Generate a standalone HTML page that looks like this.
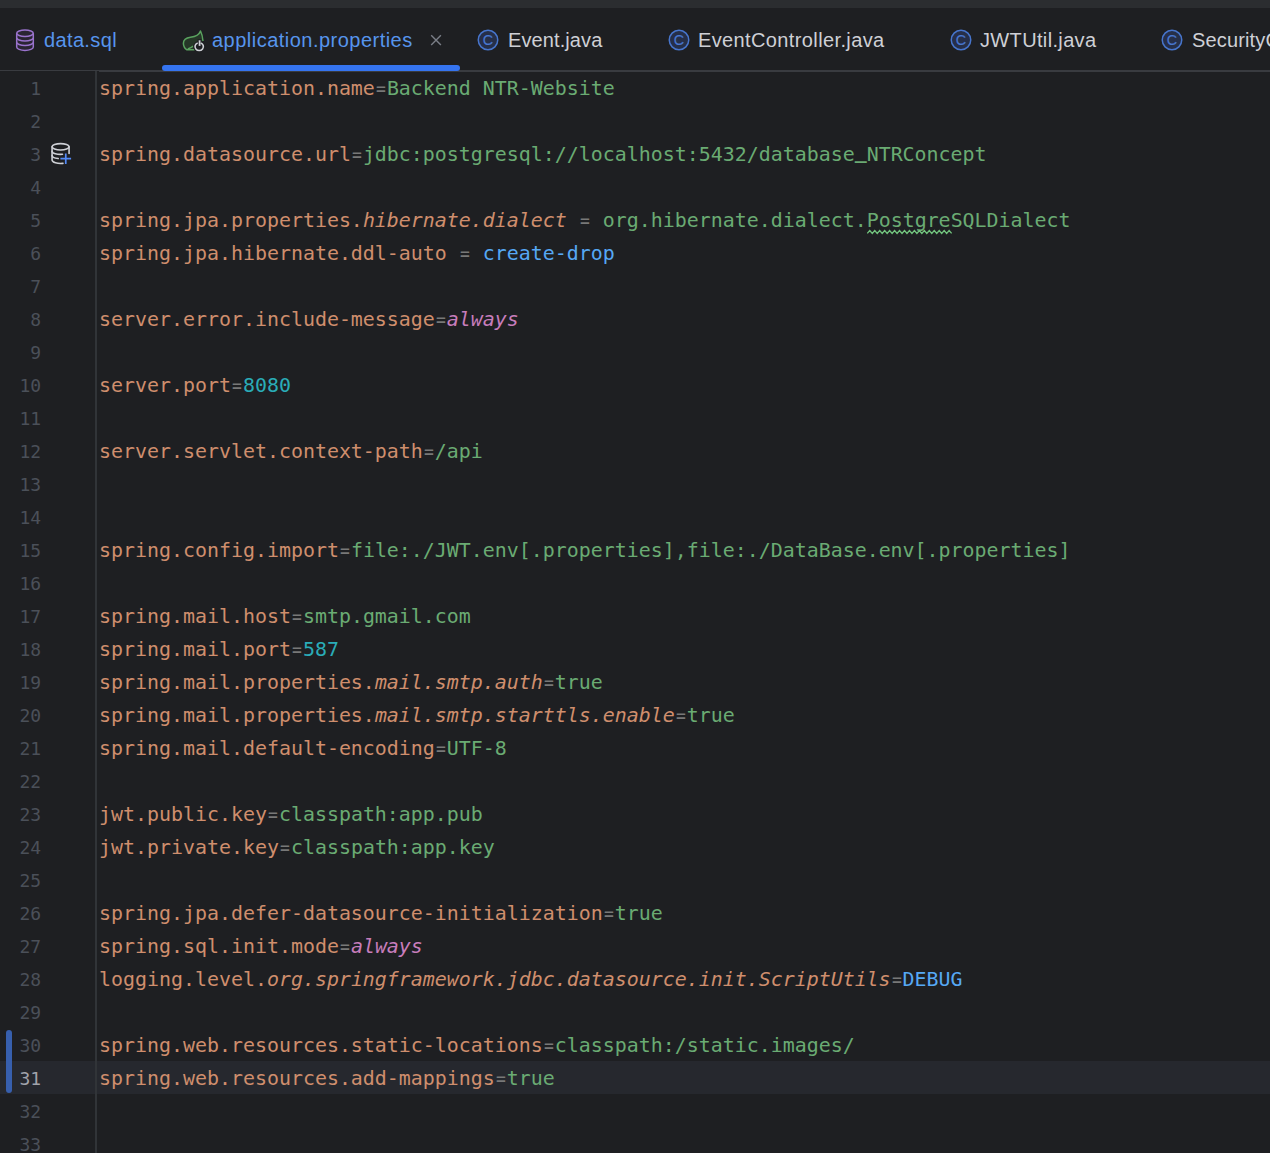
<!DOCTYPE html>
<html><head><meta charset="utf-8"><title>application.properties</title>
<style>
html,body{margin:0;padding:0}
body{width:1270px;height:1153px;overflow:hidden;background:#1e1f22;position:relative;font-family:"Liberation Sans",sans-serif}
.strip{position:absolute;left:0;top:0;width:1270px;height:8px;background:#2b2d30}
.tabline{position:absolute;left:0;top:70px;width:1270px;height:1px;background:#393b40}
.tabline2{position:absolute;left:99px;top:71px;width:1171px;height:1px;background:#393b40}
.under{position:absolute;left:162px;top:65px;width:298px;height:6px;border-radius:3px;background:#3574f0}
.tab{position:absolute;top:25.4px;height:30px;line-height:30px;font-size:20px;color:#ced0d6;white-space:nowrap}
.tab.b{color:#5795ed}
.curline{position:absolute;left:0;top:1061px;width:1270px;height:33px;background:#26282e}
.gline{position:absolute;left:95px;top:71px;width:2px;height:1082px;background:#313438}
.chg{position:absolute;left:5.5px;top:1030px;width:6px;height:63px;border-radius:3px;background:#375fad}
.ln{position:absolute;left:0;width:41px;height:33px;line-height:33px;text-align:right;color:#4b5059;font:18px/33px "DejaVu Sans Mono","Liberation Mono",monospace;letter-spacing:-0.04px}
.ln.cur{color:#a1a3ab}
.cl{position:absolute;left:99px;height:33px;white-space:pre;font:19.93px/33px "DejaVu Sans Mono","Liberation Mono",monospace;color:#bcbec4}
.k,.ki{color:#cf8e6d}.ki{font-style:italic}
.e{color:#787878}
.q{display:inline-block;transform:scaleX(0.82)}
.v,.vw{color:#6aab73}
.us{position:relative;top:-3.5px;font-weight:bold}
.n{color:#2aacb8}
.b{color:#56a8f5}
.p{color:#c77dbb;font-style:italic}
svg{position:absolute;overflow:visible}
</style></head><body>
<div class="strip"></div>
<div class="tabline"></div><div class="tabline2"></div>
<div class="under"></div>
<div class="tab b" style="left:44px;letter-spacing:0.36px">data.sql</div>
<div class="tab b" style="left:212px;letter-spacing:0.48px">application.properties</div>
<div class="tab" style="left:508px;letter-spacing:0.1px">Event.java</div>
<div class="tab" style="left:698px;letter-spacing:0.38px">EventController.java</div>
<div class="tab" style="left:980px;letter-spacing:0.35px">JWTUtil.java</div>
<div class="tab" style="left:1192px;letter-spacing:0.15px">SecurityConfig.java</div>
<div class="curline"></div>
<div class="gline"></div>
<div class="chg"></div>
<div class="ln" style="top:72px">1</div>
<div class="cl" style="top:72px"><span class="k">spring.application.name</span><span class="e"><span class="q">=</span></span><span class="v">Backend NTR-Website</span></div>
<div class="ln" style="top:105px">2</div>
<div class="ln" style="top:138px">3</div>
<div class="cl" style="top:138px"><span class="k">spring.datasource.url</span><span class="e"><span class="q">=</span></span><span class="v">jdbc:postgresql://localhost:5432/database<span class="us">_</span>NTRConcept</span></div>
<div class="ln" style="top:171px">4</div>
<div class="ln" style="top:204px">5</div>
<div class="cl" style="top:204px"><span class="k">spring.jpa.properties.</span><span class="ki">hibernate.dialect</span><span class="e"> <span class="q">=</span> </span><span class="v">org.hibernate.dialect.</span><span class="vw">Postgre</span><span class="v">SQLDialect</span></div>
<div class="ln" style="top:237px">6</div>
<div class="cl" style="top:237px"><span class="k">spring.jpa.hibernate.ddl-auto</span><span class="e"> <span class="q">=</span> </span><span class="b">create-drop</span></div>
<div class="ln" style="top:270px">7</div>
<div class="ln" style="top:303px">8</div>
<div class="cl" style="top:303px"><span class="k">server.error.include-message</span><span class="e"><span class="q">=</span></span><span class="p">always</span></div>
<div class="ln" style="top:336px">9</div>
<div class="ln" style="top:369px">10</div>
<div class="cl" style="top:369px"><span class="k">server.port</span><span class="e"><span class="q">=</span></span><span class="n">8080</span></div>
<div class="ln" style="top:402px">11</div>
<div class="ln" style="top:435px">12</div>
<div class="cl" style="top:435px"><span class="k">server.servlet.context-path</span><span class="e"><span class="q">=</span></span><span class="v">/api</span></div>
<div class="ln" style="top:468px">13</div>
<div class="ln" style="top:501px">14</div>
<div class="ln" style="top:534px">15</div>
<div class="cl" style="top:534px"><span class="k">spring.config.import</span><span class="e"><span class="q">=</span></span><span class="v">file:./JWT.env[.properties],file:./DataBase.env[.properties]</span></div>
<div class="ln" style="top:567px">16</div>
<div class="ln" style="top:600px">17</div>
<div class="cl" style="top:600px"><span class="k">spring.mail.host</span><span class="e"><span class="q">=</span></span><span class="v">smtp.gmail.com</span></div>
<div class="ln" style="top:633px">18</div>
<div class="cl" style="top:633px"><span class="k">spring.mail.port</span><span class="e"><span class="q">=</span></span><span class="n">587</span></div>
<div class="ln" style="top:666px">19</div>
<div class="cl" style="top:666px"><span class="k">spring.mail.properties.</span><span class="ki">mail.smtp.auth</span><span class="e"><span class="q">=</span></span><span class="v">true</span></div>
<div class="ln" style="top:699px">20</div>
<div class="cl" style="top:699px"><span class="k">spring.mail.properties.</span><span class="ki">mail.smtp.starttls.enable</span><span class="e"><span class="q">=</span></span><span class="v">true</span></div>
<div class="ln" style="top:732px">21</div>
<div class="cl" style="top:732px"><span class="k">spring.mail.default-encoding</span><span class="e"><span class="q">=</span></span><span class="v">UTF-8</span></div>
<div class="ln" style="top:765px">22</div>
<div class="ln" style="top:798px">23</div>
<div class="cl" style="top:798px"><span class="k">jwt.public.key</span><span class="e"><span class="q">=</span></span><span class="v">classpath:app.pub</span></div>
<div class="ln" style="top:831px">24</div>
<div class="cl" style="top:831px"><span class="k">jwt.private.key</span><span class="e"><span class="q">=</span></span><span class="v">classpath:app.key</span></div>
<div class="ln" style="top:864px">25</div>
<div class="ln" style="top:897px">26</div>
<div class="cl" style="top:897px"><span class="k">spring.jpa.defer-datasource-initialization</span><span class="e"><span class="q">=</span></span><span class="v">true</span></div>
<div class="ln" style="top:930px">27</div>
<div class="cl" style="top:930px"><span class="k">spring.sql.init.mode</span><span class="e"><span class="q">=</span></span><span class="p">always</span></div>
<div class="ln" style="top:963px">28</div>
<div class="cl" style="top:963px"><span class="k">logging.level.</span><span class="ki">org.springframework.jdbc.datasource.init.ScriptUtils</span><span class="e"><span class="q">=</span></span><span class="b">DEBUG</span></div>
<div class="ln" style="top:996px">29</div>
<div class="ln" style="top:1029px">30</div>
<div class="cl" style="top:1029px"><span class="k">spring.web.resources.static-locations</span><span class="e"><span class="q">=</span></span><span class="v">classpath:/static.images/</span></div>
<div class="ln cur" style="top:1062px">31</div>
<div class="cl" style="top:1062px"><span class="k">spring.web.resources.add-mappings</span><span class="e"><span class="q">=</span></span><span class="v">true</span></div>
<div class="ln" style="top:1095px">32</div>
<div class="ln" style="top:1128px">33</div>
<svg style="left:0;top:0" width="1270" height="72" viewBox="0 0 1270 72">
<path d="M16.7 33.2 V47.0 a8.3 3.2 0 0 0 16.6 0 V33.2 a8.3 3.2 0 0 0 -16.6 0z" fill="#2a2533"/><g fill="none" stroke="#9a73cd" stroke-width="1.5"><ellipse cx="25" cy="33.2" rx="8.3" ry="3.2"/><path d="M16.7 33.2 V47.0 a8.3 3.4000000000000004 0 0 0 16.6 0 V33.2"/><path d="M16.7 37.7 a8.3 3.2 0 0 0 16.6 0"/><path d="M16.7 42.2 a8.3 3.2 0 0 0 16.6 0"/></g>
<path d="M200.5 31 C199.3 34.6 195.5 36.7 190.5 37.3 C186.5 37.8 183.4 40 183.4 43.3 C183.4 46.5 185 48.6 186.6 49.7 H196 L203 49.7 C202.9 43 202 35.5 200.5 31z" fill="#253627"/>
<path d="M203 41 C202.6 36.8 201.8 33.6 200.5 31 C199.3 34.6 195.5 36.7 190.5 37.3 C186.5 37.8 183.4 40 183.4 43.3 C183.4 46.5 185 48.6 186.6 49.7 H194.5 M187.8 49.0 C189.6 48.4 191.6 47.5 193.3 46.2" fill="none" stroke="#5aa25f" stroke-width="1.5" stroke-linejoin="round"/>
<ellipse cx="199.2" cy="46.6" rx="6" ry="5.6" fill="#1e1f22"/>
<rect x="197.6" y="39.2" width="3.8" height="6" fill="#1e1f22"/>
<path d="M197.7 42.95 A4.2 3.9 0 1 0 200.7 42.95" fill="none" stroke="#ced0d6" stroke-width="1.6"/>
<path d="M199.6 40.3 V45.9" fill="none" stroke="#ced0d6" stroke-width="1.8"/>
<path d="M431.2 35.2 L440.9 44.9 M440.9 35.2 L431.2 44.9" stroke="#7a7e87" stroke-width="1.4" fill="none"/>
<circle cx="488" cy="40" r="9.75" fill="#262f49" stroke="#4775cc" stroke-width="1.5"/>
<text x="488" y="45.1" text-anchor="middle" font-family="Liberation Sans, sans-serif" font-size="14.4" fill="#4978d0" stroke="#4978d0" stroke-width="0.15">C</text>
<circle cx="679" cy="40" r="9.75" fill="#262f49" stroke="#4775cc" stroke-width="1.5"/>
<text x="679" y="45.1" text-anchor="middle" font-family="Liberation Sans, sans-serif" font-size="14.4" fill="#4978d0" stroke="#4978d0" stroke-width="0.15">C</text>
<circle cx="961" cy="40" r="9.75" fill="#262f49" stroke="#4775cc" stroke-width="1.5"/>
<text x="961" y="45.1" text-anchor="middle" font-family="Liberation Sans, sans-serif" font-size="14.4" fill="#4978d0" stroke="#4978d0" stroke-width="0.15">C</text>
<circle cx="1172" cy="40" r="9.75" fill="#262f49" stroke="#4775cc" stroke-width="1.5"/>
<text x="1172" y="45.1" text-anchor="middle" font-family="Liberation Sans, sans-serif" font-size="14.4" fill="#4978d0" stroke="#4978d0" stroke-width="0.15">C</text>
</svg>
<svg style="left:0;top:72px" width="1270" height="1081" viewBox="0 72 1270 1081">
<polyline points="867.30,233.4 869.78,230.5 872.26,233.4 874.74,230.5 877.22,233.4 879.70,230.5 882.18,233.4 884.66,230.5 887.14,233.4 889.62,230.5 892.10,233.4 894.58,230.5 897.06,233.4 899.54,230.5 902.02,233.4 904.50,230.5 906.98,233.4 909.46,230.5 911.94,233.4 914.42,230.5 916.90,233.4 919.38,230.5 921.86,233.4 924.34,230.5 926.82,233.4 929.30,230.5 931.78,233.4 934.26,230.5 936.74,233.4 939.22,230.5 941.70,233.4 944.18,230.5 946.66,233.4 949.14,230.5 951.62,233.4" fill="none" stroke="#72c47e" stroke-width="1.3"/>
<g fill="none" stroke="#ced0d6" stroke-width="1.6" stroke-linecap="round">
<ellipse cx="60.57" cy="146.8" rx="8.5" ry="3.2"/>
<path d="M52.07 146.8 V160 A8.5 3.5 0 0 0 63.0 163.35"/>
<path d="M69.07 146.8 V153.4"/>
<path d="M52.07 151.2 A8.5 3.2 0 0 0 62.5 154.32"/>
<path d="M52.07 155.5 A8.5 3.2 0 0 0 58.2 158.57"/>
</g>
<path d="M60.4 158.7 H71.1 M65.76 153.4 V164.1" stroke="#548af7" stroke-width="1.7" fill="none"/>
</svg>
</body></html>
